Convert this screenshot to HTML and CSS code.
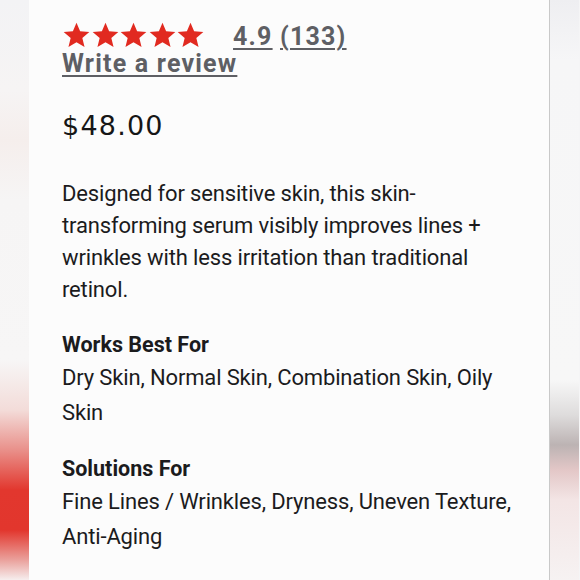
FILE: index.html
```html
<!DOCTYPE html>
<html>
<head>
<meta charset="utf-8">
<link rel="stylesheet" href="styles.css">
</head>
<body>
<div class="scene">
  <div class="side side-left"></div>
  <main class="card">
    <div class="rating-row">
      <div class="stars">
        <svg viewBox="0 0 24 24" class="star"><path d="M12 1.5l3.1 7.3 7.9.6-6 5.2 1.9 7.7L12 18.2l-6.9 4.1L7 14.6 1 9.4l7.9-.6z"/></svg>
        <svg viewBox="0 0 24 24" class="star"><path d="M12 1.5l3.1 7.3 7.9.6-6 5.2 1.9 7.7L12 18.2l-6.9 4.1L7 14.6 1 9.4l7.9-.6z"/></svg>
        <svg viewBox="0 0 24 24" class="star"><path d="M12 1.5l3.1 7.3 7.9.6-6 5.2 1.9 7.7L12 18.2l-6.9 4.1L7 14.6 1 9.4l7.9-.6z"/></svg>
        <svg viewBox="0 0 24 24" class="star"><path d="M12 1.5l3.1 7.3 7.9.6-6 5.2 1.9 7.7L12 18.2l-6.9 4.1L7 14.6 1 9.4l7.9-.6z"/></svg>
        <svg viewBox="0 0 24 24" class="star"><path d="M12 1.5l3.1 7.3 7.9.6-6 5.2 1.9 7.7L12 18.2l-6.9 4.1L7 14.6 1 9.4l7.9-.6z"/></svg>
      </div>
      <span class="score"><a class="link">4.9</a> <a class="link">(133)</a></span>
    </div>
    <a class="link review">Write a review</a>
    <div class="price">$48.00</div>
    <p class="desc">Designed for sensitive skin, this skin-transforming serum visibly improves lines + wrinkles with less irritation than traditional retinol.</p>
    <h3 class="label">Works Best For</h3>
    <p class="value">Dry Skin, Normal Skin, Combination Skin, Oily Skin</p>
    <h3 class="label">Solutions For</h3>
    <p class="value">Fine Lines / Wrinkles, Dryness, Uneven Texture, Anti-Aging</p>
  </main>
  <div class="side side-right"></div>
</div>
</body>
</html>
```

FILE: styles.css
```css
html, body {
  margin: 0;
  padding: 0;
  width: 580px;
  height: 580px;
  overflow: hidden;
  background: #f5f5f6;
}
.scene {
  display: flex;
  width: 580px;
  height: 580px;
}
.side {
  flex: none;
}
.side-left {
  width: 29px;
  background:
    linear-gradient(180deg, #f3f3f5 0px, #f6f4f4 90px, #f5eeec 140px, #f6f5f5 200px, #f7f6f6 360px, #f3dcd9 410px, #e9908a 450px, #e2372e 490px, #e2362d 530px, #eaa19c 560px, #f6eeee 580px);
}
.side-right {
  width: 29px;
  background:
    linear-gradient(180deg, #eeeef1 0px, #f6f6f7 60px, #f7f7f7 380px, #dedcdc 415px, #bcb3b3 445px, #e3c7c7 470px, #f3e5e5 500px, #f6f2f2 580px);
}
.card {
  flex: none;
  width: 521px;
  box-sizing: border-box;
  background: #fcfcfc;
  border-right: 1px solid #c9c9c9;
  padding: 21px 30px 0 33px;
  font-family: Roboto, "Liberation Sans", sans-serif;
  color: #1b1b1d;
}
.rating-row {
  display: flex;
  align-items: center;
  height: 28px;
}
.stars {
  display: flex;
}
.star {
  width: 29px;
  height: 28px;
  fill: #e12a20;
  margin-right: -0.4px;
}
.score {
  margin-left: 28px;
  font-size: 25px;
  font-weight: 700;
  letter-spacing: 1.2px;
  color: #5e5f64;
  line-height: 28px;
  position: relative;
  top: 2px;
}
.link {
  color: #5e5f64;
  text-decoration: underline;
  text-decoration-thickness: 2px;
  text-underline-offset: 3px;
}
.review {
  display: inline-block;
  font-size: 25px;
  font-weight: 700;
  letter-spacing: 1.2px;
  line-height: 30px;
}
.price {
  margin-top: 31px;
  font-family: "DejaVu Sans", Roboto, sans-serif;
  font-size: 27px;
  letter-spacing: 1.2px;
  line-height: 31px;
  color: #161616;
}
.desc {
  margin: 37px 0 0;
  font-size: 22px;
  letter-spacing: -0.15px;
  line-height: 32px;
}
.label {
  margin: 24px 0 0;
  font-size: 21.5px;
  font-weight: 700;
  line-height: 30px;
}
.value {
  margin: 0 0 3px;
  font-size: 22px;
  letter-spacing: -0.15px;
  line-height: 35px;
}
```
